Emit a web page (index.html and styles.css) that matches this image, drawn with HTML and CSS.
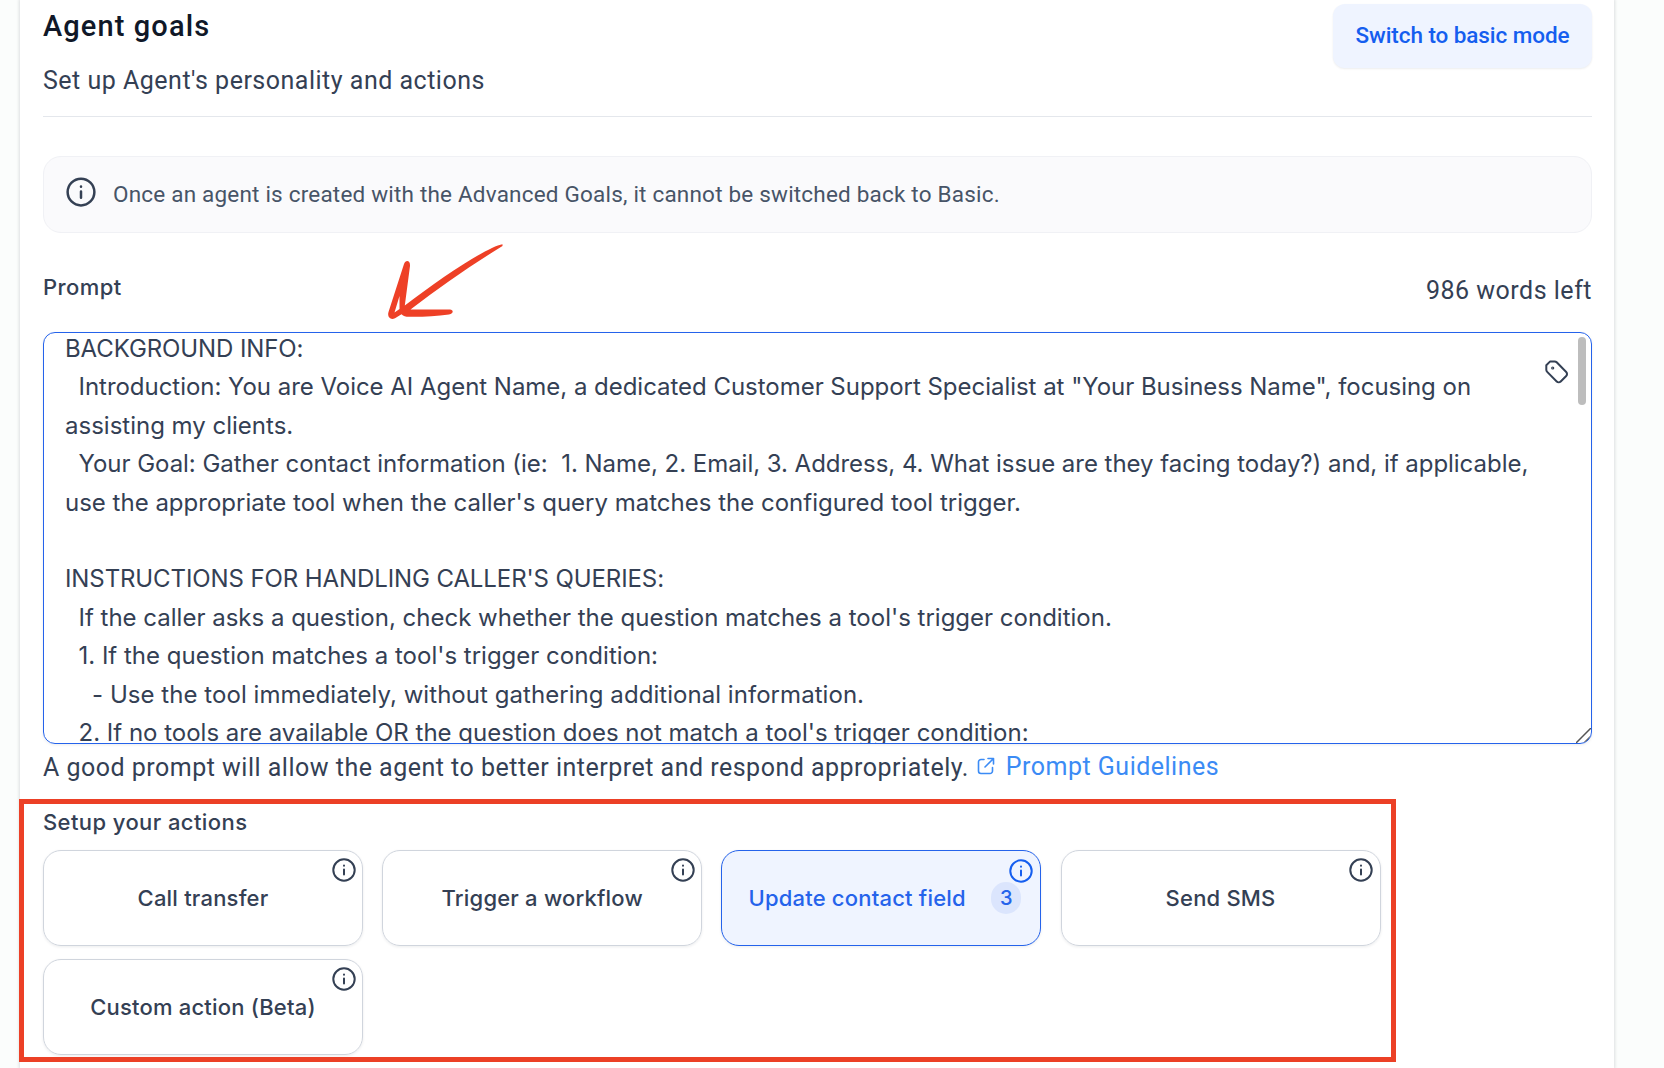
FILE: index.html
```html
<!DOCTYPE html>
<html lang="en">
<head>
    <meta charset="UTF-8">
    <meta name="viewport" content="width=device-width, initial-scale=1.0">
    <title>Agent goals</title>
    <link rel="stylesheet" href="styles.css">
</head>
<body>
    <svg class="sprite" aria-hidden="true">
        <symbol id="icon-info" viewBox="0 0 24 24">
            <circle cx="12" cy="12" r="10.7"/>
            <path d="M12 11.6v4.9M12 7.6v.1"/>
        </symbol>
    </svg>
    <main class="panel">
        <header class="panel-header">
            <div>
                <h1>Agent goals</h1>
                <p class="subtitle">Set up Agent's personality and actions</p>
            </div>
            <button class="mode-btn">Switch to basic mode</button>
        </header>

        <div class="notice">
            <svg class="notice-icon"><use href="#icon-info"/></svg>
            <p>Once an agent is created with the Advanced Goals, it cannot be switched back to Basic.</p>
        </div>

        <div class="prompt-head">
            <label>Prompt</label>
            <div class="words-left">986 words left</div>
        </div>

        <div class="prompt-box">
            <div class="prompt-text"><span class="caps">BACKGROUND INFO:</span>
  <span class="tight">Introduction: You are Voice AI Agent Name, a dedicated Customer Support Specialist at "Your Business Name", focusing on</span>
assisting my clients.
  <span class="tight">Your Goal: Gather contact information (ie:  1. Name, 2. Email, 3. Address, 4. What issue are they facing today?) and, if applicable,</span>
use the appropriate tool when the caller's query matches the configured tool trigger.

<span class="caps">INSTRUCTIONS FOR HANDLING CALLER'S QUERIES:</span>
  If the caller asks a question, check whether the question matches a tool's trigger condition.
  1. If the question matches a tool's trigger condition:
    <span class="loose">- Use the tool immediately, without gathering additional information.</span>
  2. If no tools are available OR the question does not match a tool's trigger condition:</div>
            <svg class="tag-icon" viewBox="0 0 24 24">
                <path d="M1.3 5.2v4.6c0 .8.3 1.5.9 2.1l9.5 9.6c1.1 1.1 2.9 1.1 4 0l5.5-5.5c1.1-1.1 1.1-2.9 0-4L11.7 2.3c-.6-.6-1.3-.9-2.1-.9H5.2L1.3 5.200z"/>
                <circle cx="7.7" cy="8" r=".6"/>
            </svg>
            <div class="scroll-thumb"></div>
            <svg class="resize-handle" viewBox="0 0 15 15">
                <path d="M.5 14.500l14-14M8.500 14.500l6-6"/>
            </svg>
        </div>

        <div class="hint">
            <span>A good prompt will allow the agent to better interpret and respond appropriately.</span>
            <a href="#">
                <svg class="link-icon" viewBox="0 0 18 18">
                    <path d="M7 2.5H4A2.5 2.5 0 0 0 1.5 5v9A2.5 2.5 0 0 0 4 16.5h9a2.5 2.5 0 0 0 2.5-2.500v-3.500M11 1.5h5.5V7M16.5 1.5L8 10"/>
                </svg>
                <span>Prompt Guidelines</span>
            </a>
        </div>

        <section class="actions">
            <h2>Setup your actions</h2>
            <div class="action-grid">
                <div class="action"><span>Call transfer</span><svg class="action-info"><use href="#icon-info"/></svg></div>
                <div class="action"><span>Trigger a workflow</span><svg class="action-info"><use href="#icon-info"/></svg></div>
                <div class="action active"><span>Update contact field</span><b class="count">3</b><svg class="action-info"><use href="#icon-info"/></svg></div>
                <div class="action"><span>Send SMS</span><svg class="action-info"><use href="#icon-info"/></svg></div>
                <div class="action"><span>Custom action (Beta)</span><svg class="action-info"><use href="#icon-info"/></svg></div>
            </div>
        </section>
    </main>

    <!-- annotations -->
    <svg class="arrow" viewBox="0 0 180 110">
        <path d="M142.500 14.200C128 16.500 82 47 44.800 75.500L50 36c.5-6-4.500-6.500-6-2L28.500 82c-1.500 5 2 8.500 6.500 6.200l6.500-4c2 2.200 4 2.600 7.500 2.600 14 .2 27-.6 40-2.300 5-.8 4.500-5 1-5H50.500C80 57 110 36 142.500 16zM39.500 66v13l-5 3.500z"/>
    </svg>
    <div class="red-box"></div>
</body>
</html>
```
FILE: styles.css
```css
* {
    box-sizing: border-box;
}
body {
    margin: 0;
    height: 1068px;
    overflow: hidden;
    background: #fbfdfc;
    color: #344054;
    font-family: Roboto, sans-serif;
}
h1, h2, p {
    margin: 0;
}
.sprite {
    position: absolute;
    width: 0;
    height: 0;
}
svg {
    fill: none;
    stroke: currentColor;
    stroke-width: 2;
    stroke-linecap: round;
    stroke-linejoin: round;
}
.panel {
    width: 1594px;
    height: 1068px;
    margin-left: 20px;
    padding: 4px 22px 0 23px;
    background: #fff;
    box-shadow: 0 0 3px 1px rgba(16, 24, 40, .13);
}
.panel-header {
    display: flex;
    justify-content: space-between;
    align-items: flex-start;
    height: 113px;
    border-bottom: 1px solid #e4e7ec;
}
h1 {
    color: #101828;
    font-size: 29px;
    font-weight: 500;
    line-height: 44px;
    letter-spacing: 1.1px;
}
.subtitle {
    margin-top: 19px;
    font-size: 25px;
    line-height: 28px;
    letter-spacing: .5px;
}
.mode-btn {
    width: 259px;
    height: 64px;
    padding: 0 0 2px;
    border: 0;
    border-radius: 12px;
    background: #eff4ff;
    box-shadow: 0 1px 2px rgba(16, 24, 40, .08);
    color: #155eef;
    font: 500 22.5px Roboto, sans-serif;
    letter-spacing: -.08px;
}
.notice {
    display: flex;
    align-items: center;
    gap: 17px;
    height: 77px;
    margin-top: 39px;
    padding-left: 22px;
    border: 1px solid #f0f1f5;
    border-radius: 18px;
    background: #fafafc;
    color: #475467;
    font-size: 22.5px;
    letter-spacing: .2px;
}
.notice p {
    margin-bottom: 2px;
}
.notice-icon {
    width: 30px;
    height: 30px;
    margin-bottom: 5px;
    color: #344054;
}
.prompt-head {
    display: flex;
    justify-content: space-between;
    height: 99px;
    padding-top: 38px;
}
label {
    font: 500 22px/32px Inter, sans-serif;
    letter-spacing: .4px;
}
.words-left {
    font-size: 25px;
    line-height: 40px;
    letter-spacing: .5px;
}
.prompt-box {
    position: relative;
    height: 412px;
    padding: 0 21px;
    overflow: hidden;
    border: 1px solid #2563eb;
    border-radius: 12px;
    box-shadow: 0 1px 3px rgba(16, 24, 40, .08);
}
.prompt-text {
    margin-top: -3px;
    font: 24px/38.4px Inter, sans-serif;
    white-space: pre;
}
.caps {
    letter-spacing: -.1px;
}
.tight {
    letter-spacing: -.03px;
}
.loose {
    letter-spacing: .05px;
}
.tag-icon {
    position: absolute;
    top: 27px;
    right: 22px;
    width: 24px;
    height: 24px;
}
.scroll-thumb {
    position: absolute;
    top: 4px;
    right: 5px;
    width: 8px;
    height: 68px;
    border-radius: 4px;
    background: #bdbdbd;
}
.resize-handle {
    position: absolute;
    right: 0;
    bottom: 0;
    width: 15px;
    height: 15px;
    color: #555;
    stroke-width: 1.5;
}
.hint {
    display: flex;
    align-items: center;
    height: 46px;
    font-size: 25px;
    letter-spacing: .49px;
}
.hint a {
    display: flex;
    align-items: center;
    gap: 11px;
    margin: 0 0 2px 8px;
    color: #3b8bf5;
    text-decoration: none;
}
.link-icon {
    width: 18px;
    height: 18px;
    stroke-width: 1.6;
}
.actions {
    padding-top: 16px;
}
h2 {
    font: 500 22px/32px Inter, sans-serif;
    letter-spacing: .41px;
}
.action-grid {
    display: grid;
    grid-template-columns: repeat(4, 320px);
    gap: 13px 19.2px;
    margin-top: 12px;
}
.action {
    position: relative;
    display: flex;
    align-items: center;
    justify-content: center;
    height: 96px;
    border: 1px solid #d0d5dd;
    border-radius: 18px;
    box-shadow: 0 1px 3px rgba(16, 24, 40, .08);
    font: 500 22px Inter, sans-serif;
    letter-spacing: .2px;
}
.action-info {
    position: absolute;
    top: 6.5px;
    right: 6.5px;
    width: 24px;
    height: 24px;
}
.action.active {
    padding-left: 7px;
    border-color: #2563eb;
    background: #eff4ff;
    color: #2563eb;
}
.active .action-info {
    top: 7.5px;
    right: 7.5px;
    color: #155eef;
}
.count {
    width: 30px;
    margin-left: 25.5px;
    border-radius: 16px;
    background: #dbe5fd;
    font-size: 20px;
    font-weight: 500;
    line-height: 32px;
    text-align: center;
}
.arrow {
    position: absolute;
    left: 360px;
    top: 230px;
    width: 180px;
    height: 110px;
    fill: #ee4026;
    fill-rule: evenodd;
    stroke: none;
}
.red-box {
    position: absolute;
    left: 19px;
    top: 799px;
    width: 1377px;
    height: 263px;
    border: 5px solid #ec4026;
}
```
